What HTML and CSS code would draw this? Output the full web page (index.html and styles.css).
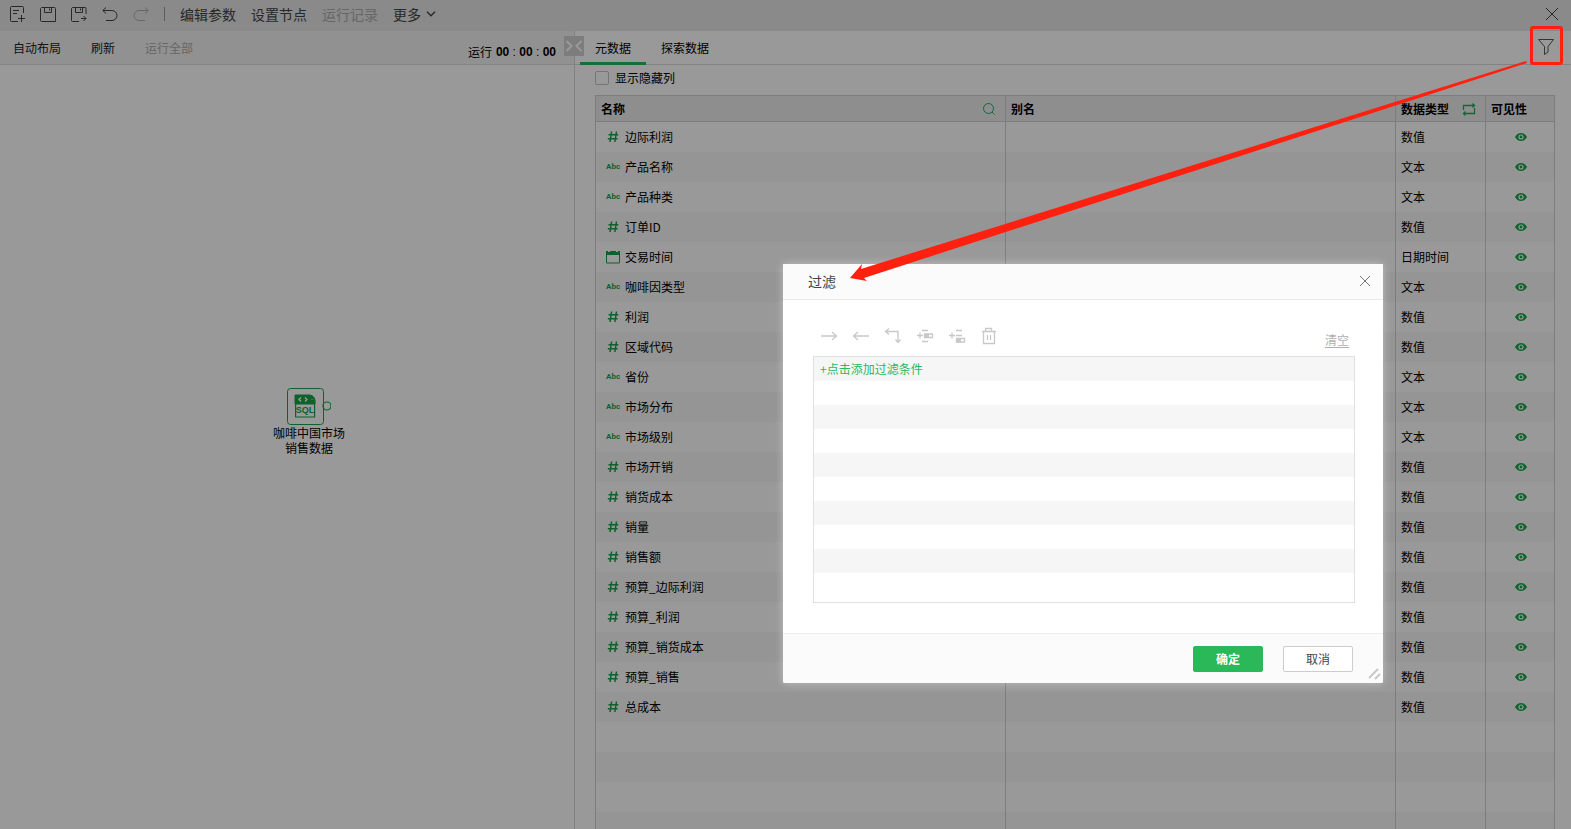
FILE: index.html
```html
<!DOCTYPE html>
<html lang="zh-CN">
<head>
<meta charset="utf-8">
<title>元数据</title>
<link rel="stylesheet" href="styles.css">
</head>
<body>
<svg class="defs" aria-hidden="true">
  <symbol id="num" viewBox="0 0 14 14"><path d="M5.600 1.500 4 12M10.500 1.500 8.900 12M2.500 4.800h9.800M1.800 8.800h9.800" stroke="currentColor" stroke-width="1.500" fill="none"/></symbol>
  <symbol id="date" viewBox="0 0 14 14"><path d="M.5 2.500h13v10.500H.5z" stroke="currentColor" fill="none"/><path d="M0 1h2v1h2V1h6v1h2V1h2v4H0z" fill="currentColor"/></symbol>
  <symbol id="eye" viewBox="0 0 12 8"><path d="M0 4C1.500 1.300 3.600 0 6 0s4.500 1.300 6 4c-1.500 2.700-3.600 4-6 4S1.500 6.700 0 4zm6-2.600a2.600 2.600 0 1 0 0 5.200 2.600 2.600 0 0 0 0-5.200zm0 1.200a1.400 1.400 0 1 1 0 2.800 1.400 1.400 0 0 1 0-2.800z" fill="currentColor" fill-rule="evenodd"/></symbol>
</svg>
<div class="app">
  <header class="topbar">
    <button class="icon-btn" aria-label="新建"><svg width="16" height="18" viewBox="0 0 16 18"><path d="M14.500 8V2.500a1 1 0 0 0-1-1h-11a1 1 0 0 0-1 1v13a1 1 0 0 0 1 1H9M4 5.500h6M4 8.500h4M12.500 10v7M9 13.500h7"/></svg></button>
    <button class="icon-btn" aria-label="保存"><svg width="16" height="18" viewBox="0 0 16 18"><path d="M1.500 2.500h13a1 1 0 0 1 1 1v13h-14a1 1 0 0 1-1-1v-12zM4.500 2.500v5h7v-5M9.500 3.500v2"/></svg></button>
    <button class="icon-btn" aria-label="另存为"><svg width="16" height="18" viewBox="0 0 16 18"><path d="M15 9V3.500a1 1 0 0 0-1-1H1.500l-1 1v12a1 1 0 0 0 1 1H8M4.500 2.500v5h7v-5M9.500 3.500v2M10 13.500h5M12.500 11l2.500 2.500-2.500 2.500"/></svg></button>
    <button class="icon-btn" aria-label="撤销"><svg width="16" height="18" viewBox="0 0 16 18"><path d="M4 2.500.8 5.500 4 8.500M1 5.500h9a5 5 0 0 1 0 10H4"/></svg></button>
    <button class="icon-btn off" aria-label="重做" disabled><svg width="16" height="18" viewBox="0 0 16 18"><path d="m12 2.500 3.200 3-3.200 3M15 5.500H6a5 5 0 0 0 0 10h6"/></svg></button>
    <span class="sep"></span>
    <button class="menu">编辑参数</button>
    <button class="menu">设置节点</button>
    <button class="menu off" disabled>运行记录</button>
    <button class="menu">更多<svg width="10" height="6" viewBox="0 0 10 6"><path d="m1 .8 4 4 4-4"/></svg></button>
    <button class="icon-btn close" aria-label="关闭"><svg width="14" height="14" viewBox="0 0 14 14"><path d="m1 1 12 12M13 1 1 13"/></svg></button>
  </header>
  <main class="body">
    <section class="flow">
      <div class="subbar">
        <button>自动布局</button>
        <button>刷新</button>
        <button class="off" disabled>运行全部</button>
        <span class="timer">运行<span class="clock"><b>00</b> : <b>00</b> : <b>00</b></span></span>
      </div>
      <div class="canvas">
        <div class="node">
          <svg width="44" height="37" viewBox="0 0 44 37">
            <rect x=".5" y=".5" width="36" height="36" rx="3" fill="none" stroke="currentColor"/>
            <circle cx="40" cy="18" r="4" fill="none" stroke="currentColor" stroke-width="1.200"/>
            <path d="M8.600 7.500h15l4 4V29h-19z" fill="none" stroke="currentColor" stroke-width="1.200"/>
            <path d="M8 7h15.500v5H28v4H8z" fill="currentColor"/><path d="M24.500 7 28 10.800h-3.500z" fill="currentColor"/>
            <path d="m14 9.500-2 2 2 2M18 9.500l2 2-2 2" class="code"/>
            <text x="18" y="25" text-anchor="middle" class="sql">SQL</text>
          </svg>
          <div class="node-name">咖啡中国市场<br>销售数据</div>
        </div>
      </div>
      <button class="toggle" aria-label="收起"><svg width="20" height="20" viewBox="0 0 20 20"><path d="m2.500 5 5 5-5 5M17.500 5l-5 5 5 5"/></svg></button>
    </section>
    <section class="meta">
      <nav class="tabs">
        <button class="tab active">元数据</button>
        <button class="tab">探索数据</button>
        <button class="icon-btn filter" aria-label="过滤"><svg width="18" height="18" viewBox="0 0 18 18"><path d="M1.500 1.500h15L11 8.500V14l-3.500 2.500v-8z"/></svg></button>
      </nav>
      <label class="hidden-cols"><input type="checkbox">显示隐藏列</label>
      <table class="grid">
        <colgroup><col class="c-name"><col><col class="c-type"><col class="c-vis"></colgroup>
        <thead><tr>
          <th><div class="th">名称<svg width="14" height="14" viewBox="0 0 14 14"><circle cx="6.500" cy="6.500" r="5"/><path d="m10 10 2.500 2.500"/></svg></div></th>
          <th>别名</th>
          <th><div class="th">数据类型<svg width="14" height="14" viewBox="0 0 14 14"><path d="M1.500 8V3.500H12M12.500 6v5.500H2M10.500 1.500l2 2-2 2M3.500 9.500l-2 2 2 2" stroke-width="1.300"/></svg></div></th>
          <th>可见性</th>
        </tr></thead>
        <tbody>
          <tr><td><div class="field"><svg><use href="#num"/></svg>边际利润</div></td><td></td><td>数值</td><td><svg class="eye"><use href="#eye"/></svg></td></tr>
          <tr><td><div class="field"><i>Abc</i>产品名称</div></td><td></td><td>文本</td><td><svg class="eye"><use href="#eye"/></svg></td></tr>
          <tr><td><div class="field"><i>Abc</i>产品种类</div></td><td></td><td>文本</td><td><svg class="eye"><use href="#eye"/></svg></td></tr>
          <tr><td><div class="field"><svg><use href="#num"/></svg>订单ID</div></td><td></td><td>数值</td><td><svg class="eye"><use href="#eye"/></svg></td></tr>
          <tr><td><div class="field"><svg><use href="#date"/></svg>交易时间</div></td><td></td><td>日期时间</td><td><svg class="eye"><use href="#eye"/></svg></td></tr>
          <tr><td><div class="field"><i>Abc</i>咖啡因类型</div></td><td></td><td>文本</td><td><svg class="eye"><use href="#eye"/></svg></td></tr>
          <tr><td><div class="field"><svg><use href="#num"/></svg>利润</div></td><td></td><td>数值</td><td><svg class="eye"><use href="#eye"/></svg></td></tr>
          <tr><td><div class="field"><svg><use href="#num"/></svg>区域代码</div></td><td></td><td>数值</td><td><svg class="eye"><use href="#eye"/></svg></td></tr>
          <tr><td><div class="field"><i>Abc</i>省份</div></td><td></td><td>文本</td><td><svg class="eye"><use href="#eye"/></svg></td></tr>
          <tr><td><div class="field"><i>Abc</i>市场分布</div></td><td></td><td>文本</td><td><svg class="eye"><use href="#eye"/></svg></td></tr>
          <tr><td><div class="field"><i>Abc</i>市场级别</div></td><td></td><td>文本</td><td><svg class="eye"><use href="#eye"/></svg></td></tr>
          <tr><td><div class="field"><svg><use href="#num"/></svg>市场开销</div></td><td></td><td>数值</td><td><svg class="eye"><use href="#eye"/></svg></td></tr>
          <tr><td><div class="field"><svg><use href="#num"/></svg>销货成本</div></td><td></td><td>数值</td><td><svg class="eye"><use href="#eye"/></svg></td></tr>
          <tr><td><div class="field"><svg><use href="#num"/></svg>销量</div></td><td></td><td>数值</td><td><svg class="eye"><use href="#eye"/></svg></td></tr>
          <tr><td><div class="field"><svg><use href="#num"/></svg>销售额</div></td><td></td><td>数值</td><td><svg class="eye"><use href="#eye"/></svg></td></tr>
          <tr><td><div class="field"><svg><use href="#num"/></svg>预算_边际利润</div></td><td></td><td>数值</td><td><svg class="eye"><use href="#eye"/></svg></td></tr>
          <tr><td><div class="field"><svg><use href="#num"/></svg>预算_利润</div></td><td></td><td>数值</td><td><svg class="eye"><use href="#eye"/></svg></td></tr>
          <tr><td><div class="field"><svg><use href="#num"/></svg>预算_销货成本</div></td><td></td><td>数值</td><td><svg class="eye"><use href="#eye"/></svg></td></tr>
          <tr><td><div class="field"><svg><use href="#num"/></svg>预算_销售</div></td><td></td><td>数值</td><td><svg class="eye"><use href="#eye"/></svg></td></tr>
          <tr><td><div class="field"><svg><use href="#num"/></svg>总成本</div></td><td></td><td>数值</td><td><svg class="eye"><use href="#eye"/></svg></td></tr>
          <tr><td></td><td></td><td></td><td></td></tr>
          <tr><td></td><td></td><td></td><td></td></tr>
          <tr><td></td><td></td><td></td><td></td></tr>
          <tr><td></td><td></td><td></td><td></td></tr>
        </tbody>
      </table>
    </section>
  </main>
  <div class="scrim"></div>
  <div class="dialog" role="dialog" aria-labelledby="dlg-title">
    <div class="dlg-head"><span id="dlg-title">过滤</span><button class="icon-btn" aria-label="关闭"><svg width="12" height="12" viewBox="0 0 12 12"><path d="m1 1 10 10M11 1 1 11"/></svg></button></div>
    <div class="dlg-body">
      <div class="tools">
        <button class="icon-btn" aria-label="右移"><svg width="18" height="18" viewBox="0 0 18 18"><path d="M1 9h15M12 5l4.500 4-4.500 4"/></svg></button>
        <button class="icon-btn" aria-label="左移"><svg width="18" height="18" viewBox="0 0 18 18"><path d="M17 9H2M6 5 1.500 9 6 13"/></svg></button>
        <button class="icon-btn" aria-label="交换"><svg width="18" height="18" viewBox="0 0 18 18"><path d="M1.500 4.500h12.500V15M5 1.500l-3.500 3L5 7.500M11.500 12.500l2.500 3 2.500-3"/></svg></button>
        <button class="icon-btn" aria-label="插入条件"><svg width="18" height="18" viewBox="0 0 18 18"><path d="M1 8.500h6M4 5.500v6M6 3.500h6M6 14.500h6M8.500 7h8v3.500h-8z"/><path d="M8 7h5v4H8z" class="solid"/></svg></button>
        <button class="icon-btn" aria-label="追加条件"><svg width="18" height="18" viewBox="0 0 18 18"><path d="M1 8.500h6M4 5.500v6M8 3.500h6M8 8.500h6M8.500 11.500h8V15h-8z"/><path d="M8 11.500h5v4H8z" class="solid"/></svg></button>
        <button class="icon-btn" aria-label="删除"><svg width="18" height="18" viewBox="0 0 18 18"><path d="M2 4.500h14M5.500 4.500v-3h6v3M3.500 4.500v12h11v-12M7.500 8v5M10.500 8v5"/></svg></button>
        <a href="#" class="clear">清空</a>
      </div>
      <div class="rules">
        <div class="rule"><a href="#">+点击添加过滤条件</a></div>
        <div class="rule"></div><div class="rule"></div><div class="rule"></div><div class="rule"></div>
        <div class="rule"></div><div class="rule"></div><div class="rule"></div><div class="rule"></div><div class="rule"></div>
      </div>
    </div>
    <div class="dlg-foot"><button class="btn primary">确定</button><button class="btn">取消</button></div>
    <svg class="grip" width="14" height="14" viewBox="0 0 14 14"><path d="M1 11 10 2M7 12l5-5"/></svg>
  </div>
  <div class="mark"></div>
  <svg class="arrow" width="731" height="290" viewBox="840 0 731 290"><path d="M850 278 862 264 861 269 1526 61 1527 63 864 278 867 281z"/></svg>
</div>
</body>
</html>
```
FILE: styles.css
```css
* { box-sizing: border-box; }
body { margin: 0; font: 12px/16px "Noto Sans CJK SC", sans-serif; color: #000; }
button { border: 0; padding: 0; margin: 0; background: none; font: inherit; color: inherit; }
svg { display: block; fill: none; stroke: currentColor; flex: none; }
.defs { position: absolute; width: 0; height: 0; }
.app { position: relative; height: 100vh; overflow: hidden; display: flex; flex-direction: column; background: #fff; }

.topbar { display: flex; align-items: center; height: 31px; padding: 0 12px 4px 9px; gap: 15px; background: #e6e6e6; color: #444; font-size: 14px; line-height: 20px; flex: none; }
.topbar .off, .subbar .off { color: #aaa; }
.sep { width: 1px; height: 14px; background: #999; }
.menu { display: flex; align-items: center; gap: 5px; }
.menu svg { stroke-width: 1.4; }
.close { margin-left: auto; }

.body { display: flex; flex: 1; min-height: 0; }
.flow { position: relative; display: flex; flex-direction: column; width: 575px; border-right: 1px solid #d9d9d9; flex: none; }
.subbar { display: flex; align-items: center; gap: 30px; height: 34px; padding: 0 18px 0 13px; background: #f2f2f2; border-bottom: 1px solid #ddd; color: #222; }
.timer { display: flex; gap: 4px; margin-left: auto; padding-top: 8px; color: #000; }
.clock { font-family: "Liberation Sans", sans-serif; }
.toggle { position: absolute; top: 5px; right: -10px; z-index: 1; background: #d0d0d0; color: #fff; }
.toggle path { stroke-width: 2; }
.canvas { position: relative; flex: 1; }
.node { position: absolute; left: 273px; top: 323px; width: 72px; color: #16a34a; }
.node > svg { margin-left: 14px; }
.code { stroke: #fff; stroke-width: 1.3; }
.sql { font: bold 9px "Liberation Sans", sans-serif; fill: currentColor; stroke: none; }
.node-name { line-height: 15px; color: #000; text-align: center; white-space: nowrap; }

.meta { flex: 1; min-width: 0; display: flex; flex-direction: column; }
.tabs { display: flex; height: 34px; padding: 0 16px 0 5px; border-bottom: 1px solid #d9d9d9; flex: none; }
.tab { height: 34px; padding: 0 15px; border-bottom: 3px solid transparent; border-top: 3px solid transparent; }
.tab.active { border-bottom-color: #2ab859; }
.filter { margin-left: auto; padding-bottom: 2px; color: #555; }
.hidden-cols { display: flex; align-items: center; gap: 6px; height: 26px; margin: 0 20px 4px; flex: none; }
.hidden-cols input { appearance: none; width: 14px; height: 14px; margin: 0; border: 1px solid #c4c4c4; border-radius: 2px; }

.grid { margin: 0 16px 0 20px; border-collapse: separate; border-spacing: 0; table-layout: fixed; width: calc(100% - 36px); border: solid #d0d0d0; border-width: 1px 0 0 1px; }
.c-name { width: 410px; }
.c-type { width: 90px; }
.c-vis { width: 69px; }
.grid th { height: 26px; padding: 0 5px; background: #ededed; text-align: left; border: solid #d0d0d0; border-width: 0 1px 1px 0; }
.th { display: flex; align-items: center; justify-content: space-between; padding-right: 4px; }
.th svg { color: #23ab5b; }
.grid td { height: 30px; padding: 0 5px 1px; border-right: 1px solid #d0d0d0; }
.grid tbody tr:nth-child(even) { background: #f9f9f9; }
.field { display: flex; align-items: center; gap: 5px; padding-left: 5px; }
.field svg { width: 14px; height: 14px; color: #16a34a; stroke: none; }
.field i { width: 14px; font: bold 8px/14px Roboto, sans-serif; color: #16a34a; }
.grid td:last-child { padding-left: 7px; }
.eye { width: 12px; height: 8px; margin: 0 auto; color: #16a34a; stroke: none; }

.scrim { position: absolute; inset: 0; z-index: 2; background: rgba(0, 0, 0, .4); }
.dialog { position: absolute; z-index: 3; top: 264px; right: 188px; width: 600px; background: #fff; border-radius: 2px; box-shadow: 0 0 8px rgba(255, 255, 255, .4); }
.dlg-head { display: flex; align-items: center; justify-content: space-between; height: 36px; padding: 0 12px 1px 25px; background: #fbfbfb; border-bottom: 1px solid #e8e8e8; font-size: 14px; color: #444; }
.dlg-head button { color: #777; }
.dlg-body { padding: 27px 28px 30px 30px; }
.tools { display: flex; gap: 14px; height: 29px; padding: 0 6px 0 7px; color: #c8c8c8; }
.tools .icon-btn { height: 18px; }
.tools svg { stroke-width: 1.3; }
.tools .solid { fill: currentColor; stroke: none; }
.clear { height: 16px; margin: 5px 0 0 auto; color: #b0b0b0; text-decoration: none; border-bottom: 1px solid #b0b0b0; }
.rules { padding-bottom: 5px; border: 1px solid #e0e0e0; }
.rule { height: 24px; padding: 0 6px; line-height: 24px; }
.rule:nth-child(odd) { background: #f6f6f6; }
.rule a { color: #2ab859; text-decoration: none; }
.dlg-foot { display: flex; align-items: center; justify-content: flex-end; gap: 20px; height: 50px; padding: 1px 30px 0; background: #fbfbfb; border-top: 1px solid #ececec; border-radius: 0 0 2px 2px; }
.btn { width: 70px; height: 26px; border: 1px solid #ccc; border-radius: 2px; background: #fff; color: #444; }
.btn.primary { background: #2ab859; border-color: #2ab859; color: #fff; font-weight: bold; }
.grip { position: absolute; right: 1px; bottom: 2px; color: #c8c8c8; stroke-width: 2; }

.mark { position: absolute; z-index: 4; top: 26px; right: 8px; width: 33px; height: 39px; border: 3px solid #ff2010; border-radius: 3px; }
.arrow { position: absolute; z-index: 4; top: 0; right: 0; fill: #ff2010; stroke: none; pointer-events: none; }
```
